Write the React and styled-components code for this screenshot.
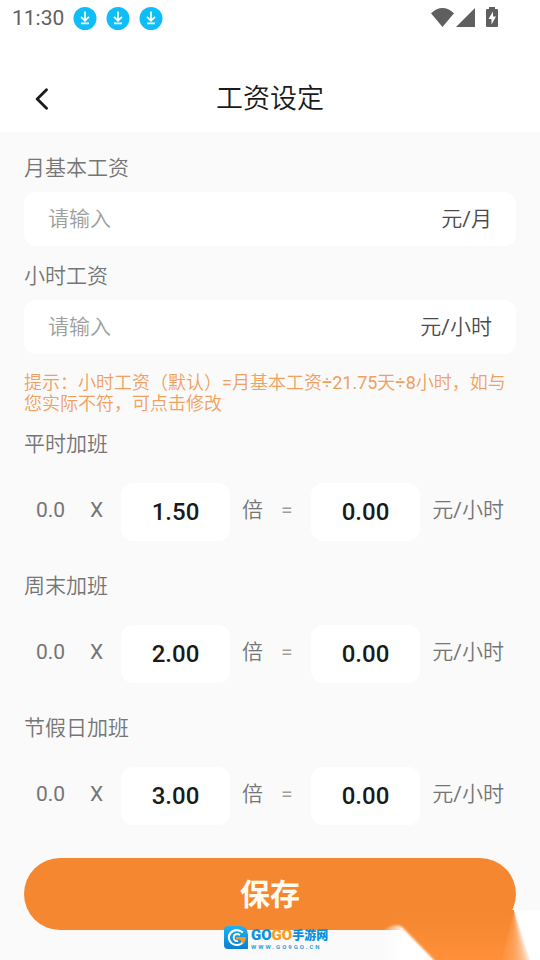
import React from 'react';
import styled, { createGlobalStyle } from 'styled-components';

const TEXT_COLOUR = '#1a1a1a';
const LABEL_COLOUR = '#757575';
const BRAND_COLOUR = '#f58731';
const PAGE_COLOUR = '#fafafa';

const OVERTIME = [
  { id: 'weekday', label: '平时加班', rate: '1.50' },
  { id: 'weekend', label: '周末加班', rate: '2.00' },
  { id: 'holiday', label: '节假日加班', rate: '3.00' },
];

export default () => (
  <Page>
    <GlobalStyle />

    <StatusBar>
      <Clock>11:30</Clock>
      <DownloadIcon />
      <DownloadIcon />
      <DownloadIcon />
      <StatusIcons />
    </StatusBar>

    <Header>
      <BackButton type="button" aria-label="返回">
        <svg width="14" height="22" viewBox="0 0 14 22" fill="none">
          <path d="M11.5 1.8L2.2 11L11.5 20.2" stroke={TEXT_COLOUR} strokeWidth="2.8" strokeLinecap="round" strokeLinejoin="round" />
        </svg>
      </BackButton>
      <Title>工资设定</Title>
    </Header>

    <Form onSubmit={e => e.preventDefault()}>
      <SalaryField id="monthly" label="月基本工资" unit="元/月" />
      <SalaryField id="hourly" label="小时工资" unit="元/小时" />

      <Hint>提示：小时工资（默认）=月基本工资÷21.75天÷8小时，如与您实际不符，可点击修改</Hint>

      {OVERTIME.map(item => <OvertimeField key={item.id} {...item} />)}

      <SaveButton type="submit">保存</SaveButton>
    </Form>

    <CornerGlow />
    <SiteMark />
  </Page>
);

const SalaryField = ({ id, label, unit }) => (
  <Field>
    <Label htmlFor={id}>{label}</Label>
    <InputBox>
      <SalaryInput id={id} placeholder="请输入" />
      <Unit>{unit}</Unit>
    </InputBox>
  </Field>
);

const OvertimeField = ({ id, label, rate }) => (
  <Overtime>
    <Label htmlFor={id}>{label}</Label>
    <RateRow>
      <RateText>0.0</RateText>
      <RateText>X</RateText>
      <RateInput id={id} defaultValue={rate} />
      <Times>
        <span>倍</span>
        <Equals>=</Equals>
      </Times>
      <RateInput aria-label={`${label} 元/小时`} defaultValue="0.00" />
      <RateUnit>元/小时</RateUnit>
    </RateRow>
  </Overtime>
);

const GlobalStyle = createGlobalStyle`
  body {
    margin: 0;
    background: ${PAGE_COLOUR};
  }

  *, input, button {
    box-sizing: border-box;
    font-family: Roboto, 'Noto Sans CJK SC DemiLight', 'Noto Sans CJK SC', sans-serif;
  }
`;

const Page = styled.div`
  position: relative;
  min-height: 100vh;
  overflow: hidden;
`;

// Phone status bar
const StatusBar = styled.div`
  display: flex;
  align-items: center;
  gap: 9px;
  height: 36px;
  padding: 0 41px 0 12px;
  background: white;
`;

const Clock = styled.span`
  color: #5f5f5f;
  font-size: 21px;
  line-height: 24px;
`;

const DownloadIcon = () => (
  <svg width="24" height="24" viewBox="0 0 24 24" fill="none">
    <circle cx="12" cy="12.5" r="11.5" fill="#0fbdf8" />
    <path d="M12 5.500V14.500M8 10.800L12 14.700L16 10.800M8 17.300H16" stroke="white" strokeWidth="1.7" />
  </svg>
);

const StatusIcons = () => (
  <StatusSvg width="68" height="24" viewBox="0 0 68 24" fill="#5f5f5f">
    <path d="M0 7.2Q11.5 -3.2 23 7.2L11.5 21Z" />
    <path d="M44 2V21H25Z" />
    <path d="M58 1H64V3H66Q67 3 67 4V20Q67 21 66 21H56Q55 21 55 20V4Q55 3 56 3H58Z" />
    <path d="M62 5.500L57.500 13H60.500V18.500L65 10.500H62Z" fill="white" />
  </StatusSvg>
);

const StatusSvg = styled.svg`
  margin-left: auto;
`;

const Header = styled.header`
  display: grid;
  grid-template-columns: 60px 1fr 60px;
  align-items: center;
  height: 96px;
  padding-top: 30px;
  background: white;
`;

const BackButton = styled.button`
  display: flex;
  align-items: center;
  justify-content: flex-end;
  width: 49px;
  height: 48px;
  padding: 0;
  border: 0;
  background: none;
`;

const Title = styled.h1`
  margin: 0;
  color: ${TEXT_COLOUR};
  font-size: 27px;
  font-weight: 400;
  line-height: 36px;
  text-align: center;
`;

const Form = styled.form`
  padding: 24px 24px 30px;
`;

const Field = styled.div`
  margin-bottom: 18px;
`;

const Label = styled.label`
  display: block;
  color: ${LABEL_COLOUR};
  font-size: 21px;
  line-height: 24px;
`;

const InputBox = styled.div`
  display: flex;
  align-items: center;
  height: 54px;
  margin-top: 12px;
  padding: 0 24px;
  border-radius: 12px;
  background: white;
`;

const SalaryInput = styled.input`
  flex: 1;
  min-width: 0;
  padding: 0;
  border: 0;
  outline: 0;
  background: none;
  color: ${TEXT_COLOUR};
  font-size: 21px;

  &::placeholder {
    color: #9e9e9e;
  }
`;

const Unit = styled.span`
  color: #4a4a4a;
  font-size: 21px;
  line-height: 24px;
`;

const Hint = styled.p`
  margin: 0 0 18px;
  color: #f0a060;
  font-size: 18px;
  line-height: 21px;
`;

const Overtime = styled.div`
  margin-bottom: 33px;
`;

const RateRow = styled.div`
  display: grid;
  grid-template-columns: 54px 31px 1fr 81px 1fr 84px;
  align-items: center;
  margin-top: 27px;
  padding: 0 12px;
`;

const RateText = styled.span`
  padding-bottom: 4px;
  color: ${LABEL_COLOUR};
  font-size: 21px;
  line-height: 24px;
`;

const RateInput = styled.input`
  width: 100%;
  height: 58px;
  padding: 0;
  border: 0;
  border-radius: 12px;
  outline: 0;
  background: white;
  color: ${TEXT_COLOUR};
  font-size: 24px;
  font-weight: 500;
  text-align: center;
`;

const Times = styled(RateText)`
  display: flex;
  align-items: center;
  gap: 18px;
  padding-left: 12px;
`;

const Equals = styled.span`
  color: #9e9e9e;
`;

const RateUnit = styled(RateText)`
  text-align: right;
`;

const SaveButton = styled.button`
  display: block;
  width: 100%;
  height: 72px;
  padding: 0 0 4px;
  border: 0;
  border-radius: 36px;
  background: ${BRAND_COLOUR};
  color: #fffbee;
  font-family: Roboto, 'Noto Sans CJK SC', sans-serif;
  font-size: 30px;
  font-weight: 700;
`;

// Orange flare in the bottom right corner, its right edge fans out into white
const FAN = Array.from({ length: 16 }, (_, i) => 120 + i * 2);

const CornerGlow = () => (
  <CornerSvg width="160" height="56" viewBox="0 0 160 56" aria-hidden="true">
    <defs>
      <linearGradient id="flare" x1="0" y1="0" x2="0" y2="56" gradientUnits="userSpaceOnUse">
        <stop offset="0.2" stopColor="#f58731" />
        <stop offset="1" stopColor="#ff8f38" />
      </linearGradient>
      <linearGradient id="tip" x1="0" y1="0" x2="1" y2="0">
        <stop offset="0" stopColor="white" stopOpacity="0" />
        <stop offset="0.4" stopColor="white" />
      </linearGradient>
      <filter id="soften" x="-10%" y="-10%" width="120%" height="120%">
        <feGaussianBlur stdDeviation="0.8" />
      </filter>
    </defs>
    <path d="M134 6H160V56H118Z" fill="white" />
    <path d="M6 26L18 6H134L122 56H52L20 26Z" fill="url(#flare)" />
    {FAN.map(x => (
      <path key={x} d={`M132 6L112 56H${x}L134 6Z`} fill="url(#flare)" opacity="0.18" />
    ))}
    <path d="M2 26Q14 20 21 22L56 58H2Z" fill="url(#tip)" filter="url(#soften)" />
  </CornerSvg>
);

const CornerSvg = styled.svg`
  position: absolute;
  right: 0;
  bottom: 0;
  pointer-events: none;
`;

const SiteMark = () => (
  <Mark>
    <svg width="25" height="24" viewBox="0 0 25 24" fill="none">
      <defs>
        <linearGradient id="badge" x1="0" y1="0" x2="0" y2="1">
          <stop offset="0" stopColor="#1db4f0" />
          <stop offset="1" stopColor="#0a7fd0" />
        </linearGradient>
      </defs>
      <path d="M4 0H16Q24 1 24 9V23H4Q0 23 0 19V4Q0 0 4 0Z" fill="url(#badge)" />
      <path d="M19 6.500Q14 2.500 9 5Q4 8 5 13Q7 19 13 19Q17 19 19 16" stroke="white" strokeWidth="2.2" />
      <path d="M16 9Q13 7 10.500 9Q8.500 12 11 14.500Q12.500 15.500 14 15" stroke="white" strokeWidth="1.800" />
      <path d="M12 11H22Q22 15 19 18L16 13.500H12Z" fill="#f99b1c" />
    </svg>
    <div>
      <MarkName>
        GO<MarkAccent>GO</MarkAccent><MarkSite>手游网</MarkSite>
      </MarkName>
      <MarkUrl>WWW.GO9GO.CN</MarkUrl>
    </div>
  </Mark>
);

const Mark = styled.div`
  position: absolute;
  bottom: 10px;
  left: 50%;
  display: flex;
  align-items: flex-start;
  gap: 2px;
  margin-left: -46px;
  white-space: nowrap;

  svg {
    flex-shrink: 0;
  }
`;

const MarkName = styled.div`
  display: flex;
  color: #0c8fdc;
  font-size: 15px;
  font-weight: 900;
  line-height: 18px;
`;

const MarkAccent = styled.span`
  color: #f99b1c;
`;

const MarkSite = styled.span`
  font-family: 'Noto Sans CJK SC', sans-serif;
  font-size: 12px;
`;

const MarkUrl = styled.div`
  color: #2b9fe0;
  font-size: 6px;
  font-weight: 700;
  line-height: 6px;
  letter-spacing: 2px;
`;
